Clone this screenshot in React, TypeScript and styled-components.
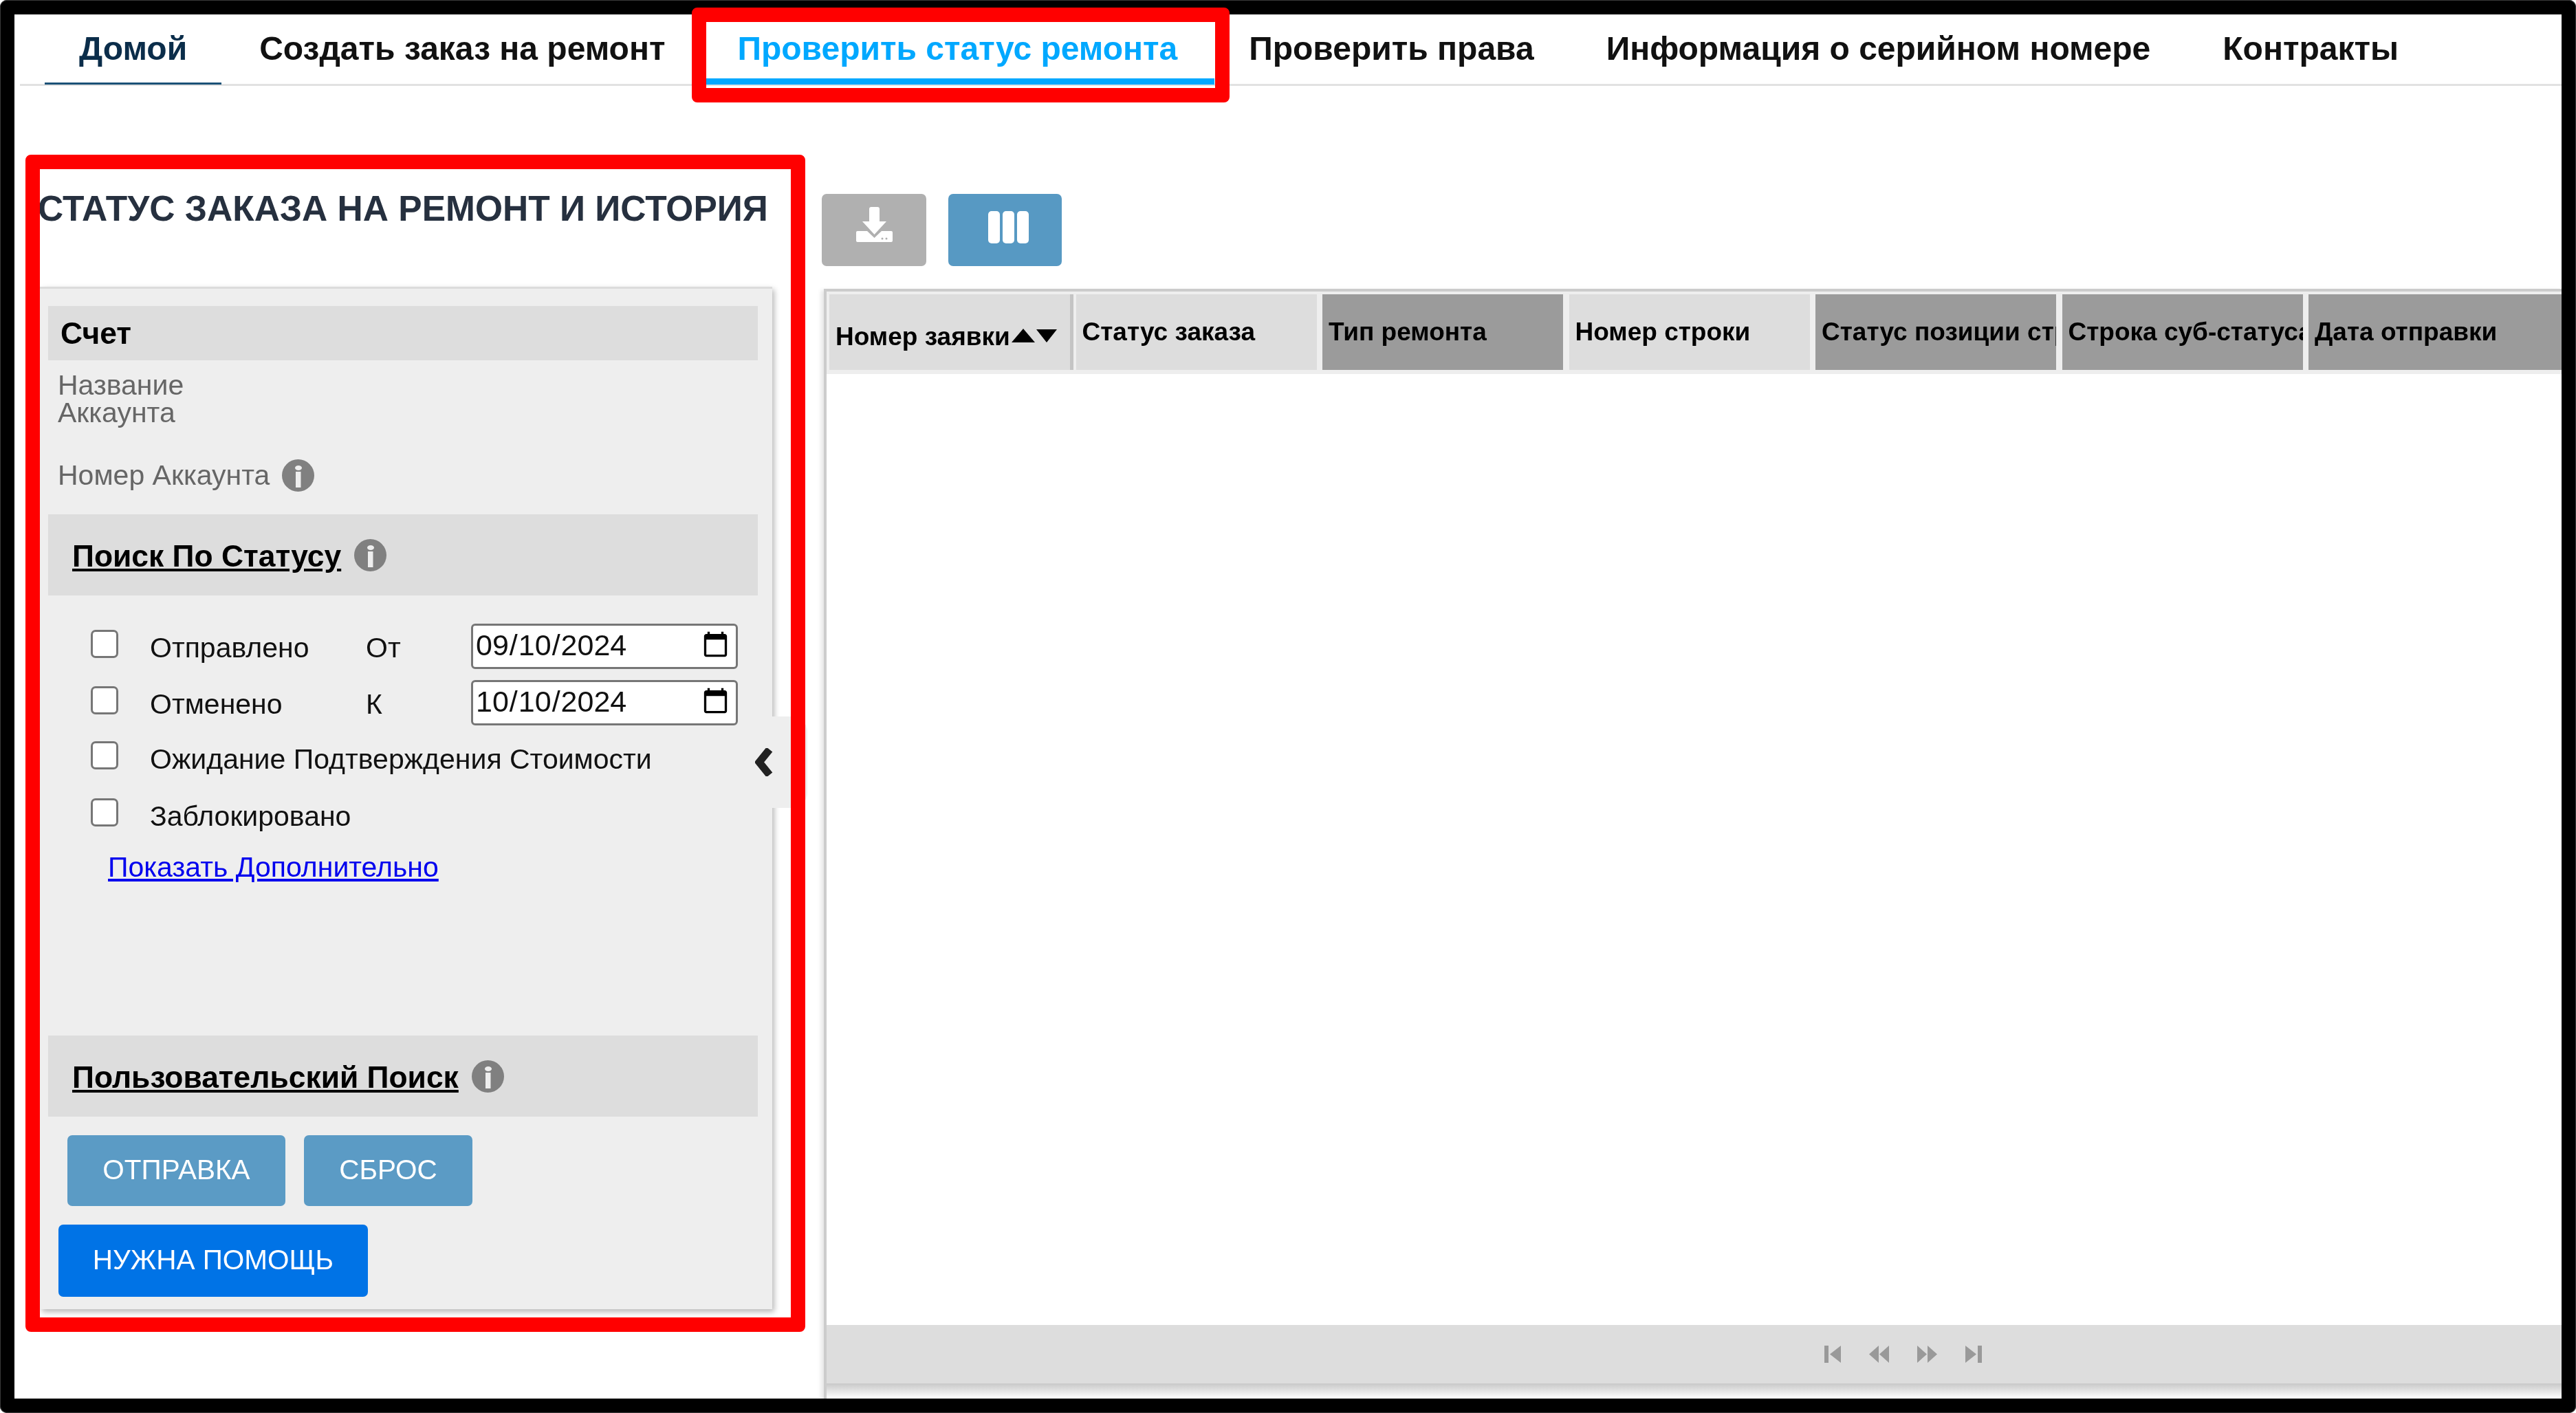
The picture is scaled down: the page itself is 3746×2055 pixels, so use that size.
import { createGlobalStyle } from 'styled-components';
import styled from 'styled-components';

const GlobalStyle = createGlobalStyle`
  html, body {
    margin: 0;
    padding: 0;
    background: #fff;
    overflow: hidden;
  }
  * { box-sizing: border-box; }
`;

const Frame = styled.div`
  position: relative;
  width: 3746px;
  height: 2055px;
  padding: 21px;
  background: #000;
  box-shadow: inset 0 0 0 1px #3a3a3a;
  border-radius: 10px;
  font-family: "Liberation Sans", Arial, sans-serif;
  overflow: hidden;
`;

/* the reference is an upscaled screenshot, so its content is a bit soft */
const Page = styled.div`
  height: 100%;
  background: #fff;
  display: flex;
  flex-direction: column;
  filter: blur(0.7px);
  overflow: hidden;
`;

const Nav = styled.nav`
  display: flex;
  height: 104px;
  flex: none;
  margin-left: 8px;
  padding-left: 36px;
  border-bottom: 3px solid #e2e2e2;
`;

const Tab = styled.a<{ $active?: boolean; $home?: boolean }>`
  display: block;
  height: 102px;
  padding: 22px ${p => (p.$active ? 54 : 50)}px 0 50px;
  margin-right: ${p => (p.$active ? 0 : 5)}px;
  font-size: 48px;
  line-height: 56px;
  font-weight: 700;
  white-space: nowrap;
  color: ${p => (p.$active ? '#00a8ff' : p.$home ? '#0b2d4a' : '#111')};
  border-bottom: ${p => (p.$active ? '9px solid #00a8ff' : p.$home ? '3px solid #1b5277' : '3px solid transparent')};
`;

const Main = styled.main`
  flex: 1;
  display: flex;
  min-height: 0;
`;

const LeftColumn = styled.section`
  flex: none;
  width: 1102px;
  padding: 150px 0 0 37px;
`;

const Title = styled.h1`
  margin: 0 0 0 -3px;
  height: 142px;
  font-size: 51.5px;
  line-height: 56px;
  font-weight: 700;
  color: #26303f;
  white-space: nowrap;
`;

const Panel = styled.div`
  position: relative;
  height: 1487px;
  width: 1065px;
  padding: 25px 21px 18px 12px;
  background: #eee;
  border-top: 3px solid #dcdcdc;
  box-shadow: 3px 4px 8px rgba(0, 0, 0, 0.28);
  display: flex;
  flex-direction: column;
`;

const SectionBar = styled.div<{ $tall?: boolean }>`
  flex: none;
  display: flex;
  align-items: center;
  gap: 19px;
  height: ${p => (p.$tall ? 118 : 79)}px;
  padding-left: ${p => (p.$tall ? 35 : 18)}px;
  background: #ddd;
  font-size: 44.4px;
  font-weight: 700;
  color: #000;
`;

const BarLink = styled.span`
  padding-top: 3px;
  text-decoration: underline;
`;

const AccountName = styled.div`
  width: 300px;
  margin: 16px 0 0 14px;
  font-size: 41px;
  line-height: 40px;
  color: #666;
`;

const AccountNumber = styled.div`
  display: flex;
  align-items: center;
  gap: 18px;
  height: 48px;
  margin: 47px 0 33px 14px;
  font-size: 41px;
  color: #666;
`;

const StatusGrid = styled.div`
  display: grid;
  grid-template-columns: 86px 314px 153px 388px;
  grid-template-rows: 82px 80px 83px 82px;
  margin: 40px 0 0 62px;
`;

const Check = styled.input`
  appearance: none;
  display: block;
  width: 40px;
  height: 41px;
  margin: 10px 0 0;
  background: #fff;
  border: 3px solid #767676;
  border-radius: 7px;
`;

const CheckLabel = styled.label<{ $wide?: boolean }>`
  margin-top: 12px;
  font-size: 41px;
  line-height: 48px;
  color: #111;
  white-space: nowrap;
  grid-column: ${p => (p.$wide ? '2 / 5' : 'auto')};
`;

const DateInput = styled.input`
  display: block;
  width: 388px;
  height: 66px;
  margin-top: 1px;
  padding: 0 6px 4px 3px;
  background: #fff;
  border: 3px solid #767676;
  border-radius: 6px;
  font-family: "Liberation Sans", Arial, sans-serif;
  font-size: 43px;
  color: #111;
`;

const MoreLink = styled.a`
  display: block;
  margin: 4px 0 0 87px;
  font-size: 41px;
  line-height: 48px;
  color: #0000ee;
  text-decoration: underline;
`;

const Spacer = styled.div`
  flex: 1;
`;

const ButtonRow = styled.div`
  display: flex;
  gap: 27px;
  margin: 27px 0 27px 28px;
`;

const Button = styled.button<{ $color: string; $w: number; $h: number }>`
  flex: none;
  display: flex;
  align-items: center;
  justify-content: center;
  width: ${p => p.$w}px;
  height: ${p => p.$h}px;
  padding: 0 0 3px;
  border: none;
  border-radius: 7px;
  background: ${p => p.$color};
  color: #fff;
  font-family: inherit;
  font-size: 40.5px;
`;

const HelpButton = styled(Button)`
  margin-left: 15px;
`;

const CollapseTab = styled.div`
  position: absolute;
  top: 622px;
  left: 1060px;
  width: 56px;
  height: 133px;
  background: #eee;
  border-radius: 0 22px 22px 0;
  z-index: 1;
`;

const Chevron = styled.svg`
  position: absolute;
  top: 1088px;
  left: 1098px;
`;

const RightColumn = styled.section`
  flex: 1;
  min-width: 0;
  padding-top: 157px;
  display: flex;
  flex-direction: column;
`;

const Toolbar = styled.div`
  display: flex;
  gap: 32px;
  height: 138px;
  margin-left: 72px;
`;

const Tool = styled(Button)<{ $pad: string }>`
  padding: ${p => p.$pad};
`;

const Grid = styled.div`
  flex: 1;
  min-height: 0;
  margin-left: 75px;
  display: flex;
  flex-direction: column;
  border-top: 4px solid #ccc;
  border-left: 4px solid #ccc;
  box-shadow: -4px 2px 6px rgba(0, 0, 0, 0.1);
  background: #fff;
`;

const HeaderRow = styled.div`
  flex: none;
  display: flex;
  gap: 8.5px;
  padding: 4px 0 6px 4px;
  background: #eee;
`;

const HeaderCell = styled.div<{ $dark?: boolean; $first?: boolean; $last?: boolean }>`
  flex: ${p => (p.$last ? '1' : 'none')};
  display: flex;
  align-items: center;
  width: 350px;
  height: 110px;
  padding: ${p => (p.$first ? 14 : 0)}px 0 0 9px;
  background: ${p => (p.$dark ? '#9b9b9b' : '#ddd')};
  font-size: 37px;
  font-weight: 700;
  color: #000;
  white-space: nowrap;
  overflow: hidden;
  box-shadow: ${p => (p.$first ? '5px 0 0 #c4c4c4' : 'none')};
`;

const SortUp = styled.span`
  width: 0;
  height: 0;
  margin: 0 2px 4px 2px;
  border-left: 17px solid transparent;
  border-right: 17px solid transparent;
  border-bottom: 20px solid #000;
`;

const SortDown = styled.span`
  width: 0;
  height: 0;
  margin-bottom: 4px;
  border-left: 15px solid transparent;
  border-right: 15px solid transparent;
  border-top: 19px solid #000;
`;

const GridBody = styled.div`
  flex: 1;
  background: #fff;
`;

const Pager = styled.div`
  flex: none;
  height: 85px;
  display: flex;
  align-items: center;
  gap: 41px;
  padding: 0 0 0 1451px;
  background: #ddd;
`;

const PagerFoot = styled.div`
  flex: none;
  height: 22px;
  background: linear-gradient(#c8c8c8, #fff);
`;

const RedBox = styled.div<{ $x: number; $y: number; $w: number; $h: number }>`
  position: absolute;
  left: ${p => p.$x}px;
  top: ${p => p.$y}px;
  width: ${p => p.$w}px;
  height: ${p => p.$h}px;
  border: 21px solid #f00;
  border-radius: 8px;
  z-index: 2;
  pointer-events: none;
`;

const InfoIcon = () => (
  <svg width="47" height="47" viewBox="0 0 47 47">
    <circle cx="23.5" cy="23.5" r="23.5" fill="#808080" />
    <ellipse cx="24" cy="12.500" rx="5" ry="3.500" fill="#eee" />
    <path d="M20 18h7.500v23H20z" fill="#eee" />
  </svg>
);

const DownloadIcon = () => (
  <svg width="53" height="51" viewBox="0 0 53 51">
    <path d="M22 0h9a3 3 0 0 1 3 3v18h10L26.500 40 9 21h10V3a3 3 0 0 1 3-3z" fill="#fff" />
    <path d="M2 35h14l10.500 10L37 35h14a2 2 0 0 1 2 2v12a2 2 0 0 1-2 2H2a2 2 0 0 1-2-2V37a2 2 0 0 1 2-2z" fill="#fff" />
    <circle cx="38" cy="46" r="1.500" fill="#b0b0b0" />
    <circle cx="44" cy="46" r="1.500" fill="#b0b0b0" />
  </svg>
);

const ColumnsIcon = () => (
  <svg width="59" height="47" viewBox="0 0 59 47">
    <rect x="0" y="0" width="17" height="47" rx="5" fill="#fff" />
    <rect x="21" y="0" width="17" height="47" rx="5" fill="#fff" />
    <rect x="42" y="0" width="17" height="47" rx="5" fill="#fff" />
  </svg>
);

const PagerIcon = ({ d, w }: { d: string; w: number }) => (
  <svg width={w} height="25" viewBox={`0 0 ${w} 25`}>
    <path d={d} fill="#999" />
  </svg>
);

const columns = [
  { title: 'Статус заказа' },
  { title: 'Тип ремонта', dark: true },
  { title: 'Номер строки' },
  { title: 'Статус позиции строки', dark: true },
  { title: 'Строка суб-статуса', dark: true },
  { title: 'Дата отправки', dark: true, last: true },
];

export default function App() {
  return (
    <>
      <GlobalStyle />
      <Frame>
        <Page>
          <Nav>
            <Tab $home>Домой</Tab>
            <Tab>Создать заказ на ремонт</Tab>
            <Tab $active>Проверить статус ремонта</Tab>
            <Tab>Проверить права</Tab>
            <Tab>Информация о серийном номере</Tab>
            <Tab>Контракты</Tab>
          </Nav>
          <Main>
            <LeftColumn>
              <Title>СТАТУС ЗАКАЗА НА РЕМОНТ И ИСТОРИЯ</Title>
              <Panel>
                <SectionBar>Счет</SectionBar>
                <AccountName>Название Аккаунта</AccountName>
                <AccountNumber>
                  Номер Аккаунта <InfoIcon />
                </AccountNumber>
                <SectionBar $tall>
                  <BarLink>Поиск По Статусу</BarLink> <InfoIcon />
                </SectionBar>
                <StatusGrid>
                  <Check type="checkbox" />
                  <CheckLabel>Отправлено</CheckLabel>
                  <CheckLabel>От</CheckLabel>
                  <DateInput type="date" defaultValue="2024-09-10" />
                  <Check type="checkbox" />
                  <CheckLabel>Отменено</CheckLabel>
                  <CheckLabel>К</CheckLabel>
                  <DateInput type="date" defaultValue="2024-10-10" />
                  <Check type="checkbox" />
                  <CheckLabel $wide>Ожидание Подтверждения Стоимости</CheckLabel>
                  <Check type="checkbox" />
                  <CheckLabel $wide>Заблокировано</CheckLabel>
                </StatusGrid>
                <MoreLink href="#">Показать Дополнительно</MoreLink>
                <Spacer />
                <SectionBar $tall>
                  <BarLink>Пользовательский Поиск</BarLink> <InfoIcon />
                </SectionBar>
                <ButtonRow>
                  <Button $color="#5b9bc5" $w={317} $h={103}>ОТПРАВКА</Button>
                  <Button $color="#5b9bc5" $w={245} $h={103}>СБРОС</Button>
                </ButtonRow>
                <HelpButton $color="#0073e6" $w={450} $h={105}>НУЖНА ПОМОЩЬ</HelpButton>
                <CollapseTab />
              </Panel>
            </LeftColumn>
            <RightColumn>
              <Toolbar>
                <Tool $color="#b0b0b0" $w={152} $h={105} $pad="0 0 16px 0"><DownloadIcon /></Tool>
                <Tool $color="#5799c3" $w={165} $h={105} $pad="0 0 8px 10px"><ColumnsIcon /></Tool>
              </Toolbar>
              <Grid>
                <HeaderRow>
                  <HeaderCell $first>
                    Номер заявки<SortUp /><SortDown />
                  </HeaderCell>
                  {columns.map(c => (
                    <HeaderCell key={c.title} $dark={c.dark} $last={c.last}>{c.title}</HeaderCell>
                  ))}
                </HeaderRow>
                <GridBody />
                <Pager>
                  <PagerIcon w={24} d="M0 0h6v25H0zM24 0v25L8 12.500z" />
                  <PagerIcon w={29} d="M14 0v25L0 12.500zM29 0v25L15 12.500z" />
                  <PagerIcon w={29} d="M0 0v25l14-12.500zM15 0v25l14-12.500z" />
                  <PagerIcon w={24} d="M18 0h6v25h-6zM0 0v25l16-12.500z" />
                </Pager>
                <PagerFoot />
              </Grid>
            </RightColumn>
          </Main>
        </Page>
        <Chevron width="29" height="41" viewBox="0 0 29 41">
          <path d="M21 2L6 20.500 21 39" fill="none" stroke="#222" strokeWidth="11" />
        </Chevron>
        <RedBox $x={1006} $y={11} $w={782} $h={138} />
        <RedBox $x={37} $y={225} $w={1134} $h={1712} />
      </Frame>
    </>
  );
}
